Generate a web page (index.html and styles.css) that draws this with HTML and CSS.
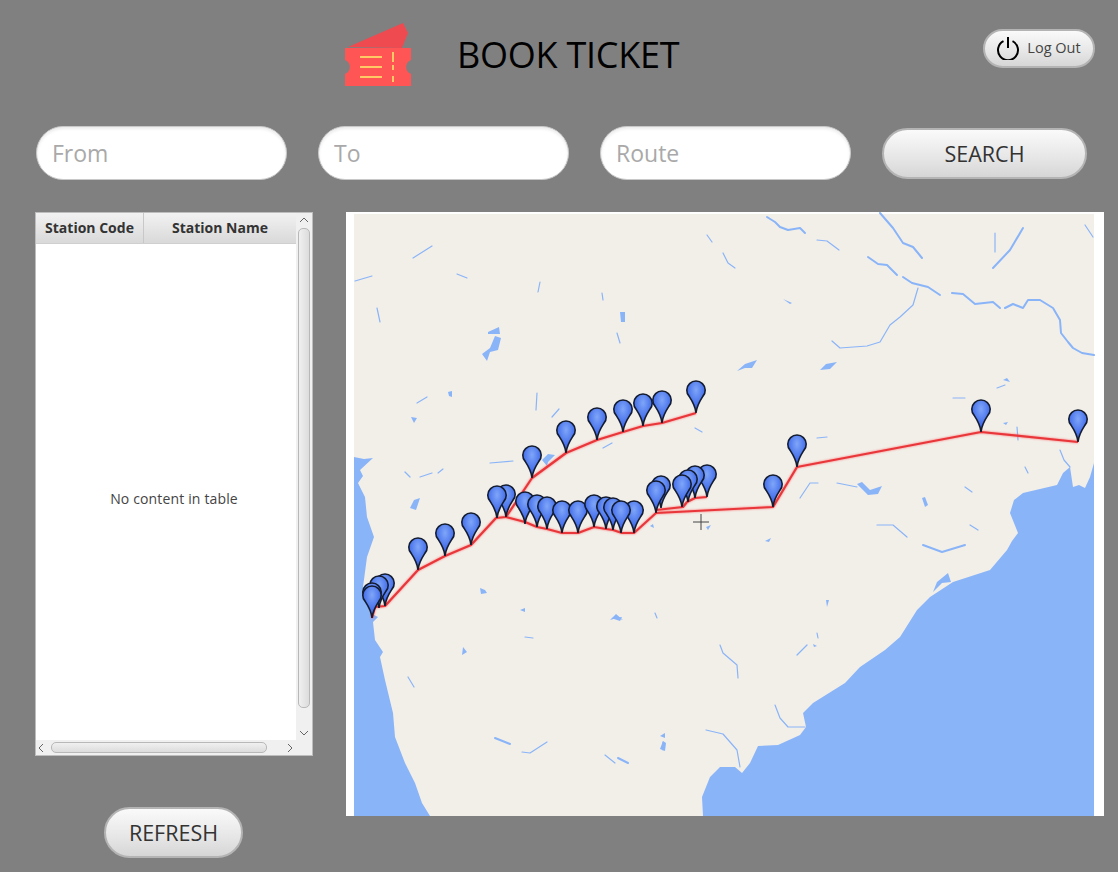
FILE: index.html
```html
<!DOCTYPE html>
<html lang="en">
<head>
  <meta charset="UTF-8" />
  <title>Book Ticket</title>
  <link rel="stylesheet" href="styles.css">
</head>
<body>
  <header class="top">
    <svg class="logo" viewBox="345 23 67 63">
      <path fill="#ee4a50" d="M348 47 403 23 408 33 402 48Z"/>
      <path fill="#ff5555" d="M345 48H411V60A7.500 7.500 0 0 0 411 74V86H345V74A7.500 7.500 0 0 0 345 60Z"/>
      <path stroke="#ffc966" stroke-width="2" fill="none" d="M360 57H382M360 67H382M360 77H382"/>
      <path stroke="#ffc966" stroke-width="2" fill="none" stroke-dasharray="10 3 5 6 7" d="M393 52V82"/>
    </svg>
    <h1 class="title">BOOK TICKET</h1>
    <button class="btn btn-logout" type="button">
      <svg class="power" viewBox="0 0 24 24"><path d="M7.5 5.2A10 10 0 1 0 16.500 5.200M12 1V12"/></svg>
      Log Out
    </button>
  </header>

  <section class="search">
    <input class="field" type="text" placeholder="From">
    <input class="field" type="text" placeholder="To">
    <input class="field" type="text" placeholder="Route">
    <button class="btn btn-search" type="button">SEARCH</button>
  </section>

  <main class="main">
    <div class="left">
      <div class="table">
        <div class="table-view">
          <div class="thead">
            <div class="th th-code">Station Code</div>
            <div class="th th-name">Station Name</div>
          </div>
          <div class="tbody">No content in table</div>
        </div>
        <div class="vbar">
          <svg class="arrow" viewBox="0 0 10 6"><path d="M1 5 5 1 9 5"/></svg>
          <div class="vthumb"></div>
          <svg class="arrow arrow-end" viewBox="0 0 10 6"><path d="M1 1 5 5 9 1"/></svg>
        </div>
        <div class="hbar">
          <svg class="arrow-h" viewBox="0 0 6 10"><path d="M5 1 1 5 5 9"/></svg>
          <div class="hthumb"></div>
          <svg class="arrow-h" viewBox="0 0 6 10"><path d="M1 1 5 5 1 9"/></svg>
        </div>
        <div class="corner"></div>
      </div>
      <button class="btn btn-refresh" type="button">REFRESH</button>
    </div>

    <svg class="map" viewBox="346 212 758 604">
      <defs>
        <radialGradient id="pinFill" cx="0.5" cy="0.28" r="0.6">
          <stop offset="0" stop-color="#7fa6f8"/>
          <stop offset="1" stop-color="#3560e8"/>
        </radialGradient>
        <symbol id="pin" overflow="visible">
          <path fill="url(#pinFill)" stroke="#141c30" stroke-width="1.6" d="M0 0C-.5-6-2.500-10-6.800-16.600A9.200 9.200 0 1 1 6.800-16.600C2.500-10 .5-6 0 0Z"/>
        </symbol>
      </defs>
      <rect x="346" y="212" width="758" height="604" fill="#fff"/>
      <rect x="354" y="214" width="740" height="602" fill="#f2efe9"/>

      <!-- sea -->
      <g class="sea">
        <path d="M1094 463 1090 477 1085 488 1079 485 1073 487 1070 467 1063 473 1057 485 1023 493 1014 500 1010 513 1018 533 1012 541 1007 550 990 570 953 582 930 597 917 610 900 637 885 650 860 667 845 683 813 703 803 713 806 727 800 735 778 745 758 746 750 763 742 773 735 767 720 767 710 777 702 797 703 816H1094Z"/>
        <path d="M354 457 364 459 373 458 360 470 363 476 358 483 365 497 367 517 374 537 367 557 363 587 370 613 378 617 373 622 375 640 383 652 380 657 385 680 393 713 395 737 405 763 415 783 422 803 430 816H354Z"/>
      </g>

      <!-- rivers -->
      <g class="river">
        <path class="wide" d="M767 217 775 222 780 227 788 230 800 228 805 233"/>
        <path d="M817 240 827 241 839 250"/>
        <path d="M723 253 728 263 735 268"/>
        <path class="wide" d="M880 213 893 228 903 243 913 247 922 258"/>
        <path class="wide" d="M868 257 878 264 887 265 897 275"/>
        <path class="wide" d="M903 277 912 283 928 287 940 295"/>
        <path class="wide" d="M952 293 963 294 975 304 993 302 1000 308"/>
        <path class="wide" d="M1005 308 1013 304 1023 308 1028 300 1040 300 1053 308 1060 320 1061 333 1068 342 1073 348 1082 353 1094 355"/>
        <path d="M918 288 913 305 900 317 890 325 880 342 867 346 840 348 832 341"/>
        <path class="wide" d="M1023 228 1010 250 993 268"/>
        <path d="M995 233 995 252"/>
        <path d="M1085 225 1093 237"/>
        <path d="M413 258 432 246"/>
        <path d="M355 281 372 276"/>
        <path d="M457 274 467 278"/>
        <path d="M707 235 712 242"/>
        <path d="M377 308 380 322"/>
        <path d="M538 292 540 282"/>
        <path d="M602 293 603 300"/>
        <path d="M617 333 620 343"/>
        <path d="M417 403 427 397"/>
        <path d="M537 393 536 410"/>
        <path d="M552 417 559 409"/>
        <path d="M490 463 513 461"/>
        <path d="M405 472 410 477"/>
        <path d="M420 477 432 473"/>
        <path d="M438 473 443 469"/>
        <path d="M603 448 612 443"/>
        <path d="M695 428 702 432"/>
        <path d="M817 438 827 437"/>
        <path d="M800 498 810 483 818 483"/>
        <path d="M837 483 857 487"/>
        <path d="M965 487 972 492"/>
        <path d="M877 525 893 525 907 537"/>
        <path class="wide" d="M923 545 942 552 965 545"/>
        <path d="M970 525 978 530"/>
        <path d="M1025 467 1028 473"/>
        <path d="M1017 427 1018 440"/>
        <path d="M953 398 965 398"/>
        <path d="M997 388 1005 385"/>
        <path d="M797 655 807 645"/>
        <path d="M817 633 818 638"/>
        <path d="M720 645 723 653 737 665 738 678"/>
        <path d="M775 705 780 718 788 727 805 727"/>
        <path d="M706 730 723 734 737 750 740 767"/>
        <path d="M525 637 533 638"/>
        <path d="M408 677 414 687"/>
        <path class="wide" d="M495 738 510 744"/>
        <path d="M522 752 530 753 547 742"/>
        <path d="M605 755 615 763"/>
        <path class="wide" d="M618 758 628 763"/>
        <path d="M663 742 663 750"/>
        <path d="M655 613 657 618"/>
        <path d="M1060 450 1064 460 1070 467"/>
      </g>

      <!-- lakes -->
      <g class="lake">
        <path d="M488 332 499 327 500 334 488 334Z"/>
        <path d="M495 336 501 338 498 350 490 352 487 361 482 354 490 348Z"/>
        <path d="M737 371 745 364 757 360 752 368 745 368Z"/>
        <path d="M820 370 826 364 837 362 830 369Z"/>
        <path d="M783 299 792 303 790 304Z"/>
        <path d="M620 312H625V322H621Z"/>
        <path d="M448 392 452 391 452 397 449 396Z"/>
        <path d="M410 508 414 500 420 498 416 510Z"/>
        <path d="M411 417 417 418 414 423Z"/>
        <path d="M542 460 548 454 555 455 548 462 547 466Z"/>
        <path d="M480 588 485 590 487 593 481 594Z"/>
        <path d="M463 647 467 652 462 655Z"/>
        <path d="M610 620 616 614 623 620 617 618Z"/>
        <path d="M857 484 862 482 870 490 882 486 878 494 868 495Z"/>
        <path d="M922 498 925 497 928 505 925 507Z"/>
        <path d="M933 592 937 582 948 573 951 582 942 583Z"/>
        <path d="M813 644 817 646 814 647Z"/>
        <path d="M660 736 665 733 665 738Z"/>
        <path d="M663 741 666 743 665 751 660 749Z"/>
        <path d="M520 610 525 608 525 612Z"/>
        <path d="M1003 380 1007 378 1010 382Z"/>
        <path d="M1003 423 1008 422 1006 425Z"/>
        <path d="M765 541 771 538 769 542Z"/>
        <path d="M650 526 653 524 654 528Z"/>
        <path d="M706 527 711 525 708 530Z"/>
        <path d="M826 600 829 600 827 607Z"/>
        <path d="M611 618 622 617 620 621Z"/>
      </g>

      <!-- route -->
      <g class="route">
        <path d="M372 618 375 607 385 606 418 570 445 556 471 545 496 518 506 517 532 478 566 453 597 440 623 432 643 426 662 423 696 413"/>
        <path d="M506 517 525 522 537 527 547 529 562 533 578 533 594 527 606 529 613 530 622 533 634 533 656 513 773 507 797 467 981 432 1078 442"/>
        <path d="M656 510 683 507 687 502 695 498 707 497"/>
      </g>

      <!-- stations -->
      <g>
        <use href="#pin" x="385" y="606"/>
        <use href="#pin" x="379" y="608"/>
        <use href="#pin" x="372" y="615"/>
        <use href="#pin" x="372" y="618"/>
        <use href="#pin" x="418" y="570"/>
        <use href="#pin" x="445" y="556"/>
        <use href="#pin" x="471" y="545"/>
        <use href="#pin" x="506" y="517"/>
        <use href="#pin" x="497" y="518"/>
        <use href="#pin" x="532" y="478"/>
        <use href="#pin" x="566" y="453"/>
        <use href="#pin" x="597" y="440"/>
        <use href="#pin" x="623" y="432"/>
        <use href="#pin" x="643" y="426"/>
        <use href="#pin" x="662" y="423"/>
        <use href="#pin" x="696" y="413"/>
        <use href="#pin" x="525" y="524"/>
        <use href="#pin" x="537" y="527"/>
        <use href="#pin" x="547" y="529"/>
        <use href="#pin" x="562" y="533"/>
        <use href="#pin" x="578" y="533"/>
        <use href="#pin" x="594" y="527"/>
        <use href="#pin" x="634" y="533"/>
        <use href="#pin" x="606" y="529"/>
        <use href="#pin" x="613" y="530"/>
        <use href="#pin" x="621" y="533"/>
        <use href="#pin" x="661" y="508"/>
        <use href="#pin" x="656" y="513"/>
        <use href="#pin" x="707" y="497"/>
        <use href="#pin" x="695" y="498"/>
        <use href="#pin" x="688" y="502"/>
        <use href="#pin" x="682" y="507"/>
        <use href="#pin" x="773" y="507"/>
        <use href="#pin" x="797" y="467"/>
        <use href="#pin" x="981" y="432"/>
        <use href="#pin" x="1078" y="442"/>
      </g>

      <path class="cross" d="M693 522H709M701 514V530"/>
    </svg>
  </main>
</body>
</html>
```

FILE: styles.css
```css
body {
  margin: 0;
  background: #808080;
  font-family: "Open Sans", sans-serif;
  color: #333;
}

.top {
  display: flex;
  height: 63px;
  padding: 23px 23px 0 345px;
}
.logo {
  width: 67px;
  height: 63px;
  margin-right: 45px;
}
.title {
  margin: 0;
  font-size: 36px;
  font-weight: 400;
  line-height: 63px;
  letter-spacing: -0.25px;
  color: #000;
}

.btn {
  font-family: "Open Sans", sans-serif;
  color: #333;
  border: 2px solid #b4b4b4;
  border-radius: 30px;
  background: linear-gradient(#fafafa, #e6e6e6 60%, #d6d6d6);
  padding: 0;
}
.btn-logout {
  display: flex;
  align-items: center;
  justify-content: center;
  gap: 7px;
  width: 112px;
  height: 39px;
  margin: 6px 0 0 auto;
  padding-bottom: 2px;
  padding-right: 1px;
  font-size: 14.5px;
  color: #444;
}
.power {
  width: 24px;
  height: 24px;
}
.power path {
  fill: none;
  stroke: #000;
  stroke-width: 2;
}

.search {
  display: flex;
  align-items: center;
  gap: 31px;
  margin-top: 40px;
  padding-left: 36px;
}
.field {
  box-sizing: border-box;
  width: 251px;
  height: 54px;
  padding: 0 15px;
  border: 1px solid #c8c8c8;
  border-radius: 27px;
  background: #fff;
  box-shadow: inset 0 2px 3px rgba(0, 0, 0, 0.08);
  font-family: "Open Sans", sans-serif;
  font-size: 23px;
}
.field::placeholder {
  color: #a9a9a9;
}
.btn-search {
  width: 205px;
  height: 51px;
  font-size: 21.5px;
}

.main {
  display: flex;
  gap: 33px;
  margin-top: 32px;
  padding-left: 35px;
}
.left {
  width: 278px;
}

.table {
  box-sizing: border-box;
  display: grid;
  grid-template-columns: 1fr 16px;
  grid-template-rows: 1fr 15px;
  height: 544px;
  border: 1px solid #bdbdbd;
  background: #f0f0f0;
}
.table-view {
  display: flex;
  flex-direction: column;
  background: #fff;
}
.thead {
  display: flex;
  height: 30px;
  background: linear-gradient(#f2f2f2, #d9d9d9);
  border-bottom: 1px solid #cfcfcf;
  font-size: 14px;
  font-weight: 700;
  line-height: 30px;
  color: #333;
}
.th {
  box-sizing: border-box;
  text-align: center;
}
.th-code {
  width: 108px;
  border-right: 1px solid #c8c8c8;
}
.th-name {
  flex: 1;
}
.tbody {
  flex: 1;
  display: flex;
  align-items: center;
  justify-content: center;
  padding: 12px 0 0 16px;
  font-size: 14px;
  letter-spacing: 0.15px;
  color: #444;
}

.vbar {
  display: flex;
  flex-direction: column;
  align-items: center;
  padding-top: 4px;
}
.arrow {
  width: 10px;
  height: 6px;
}
.arrow-end {
  margin-top: auto;
  margin-bottom: 4px;
}
.arrow path,
.arrow-h path {
  fill: none;
  stroke: #666;
  stroke-width: 1;
}
.vthumb {
  box-sizing: border-box;
  width: 12px;
  height: 480px;
  margin-top: 5px;
  border: 1px solid #b8b8b8;
  border-radius: 5px;
  background: linear-gradient(90deg, #f0f0f0, #dcdcdc);
}
.hbar {
  display: flex;
  align-items: center;
  padding-left: 2px;
}
.arrow-h {
  width: 6px;
  height: 10px;
}
.hthumb {
  box-sizing: border-box;
  width: 216px;
  height: 11px;
  margin: 0 20px 0 7px;
  border: 1px solid #b8b8b8;
  border-radius: 5px;
  background: linear-gradient(#f0f0f0, #dcdcdc);
}
.corner {
  background: #f0f0f0;
}

.btn-refresh {
  display: block;
  width: 139px;
  height: 51px;
  margin: 51px 0 0 69px;
  font-size: 21.5px;
}

.map {
  width: 758px;
  height: 604px;
}
.sea path {
  fill: #8ab4f8;
}
.river {
  filter: blur(0.4px);
}
.river path {
  fill: none;
  stroke: #8ab4f8;
  stroke-width: 1.2;
  stroke-linejoin: round;
  stroke-linecap: round;
}
.river .wide {
  stroke-width: 2;
}
.lake {
  filter: blur(0.4px);
}
.lake path {
  fill: #8ab4f8;
}
.route {
  filter: drop-shadow(0 0 1px rgba(255, 90, 90, 0.8));
}
.route path {
  fill: none;
  stroke: #e8363a;
  stroke-width: 2.2;
  stroke-linejoin: round;
}
.cross {
  fill: none;
  stroke: #444;
  stroke-width: 1;
}
```
